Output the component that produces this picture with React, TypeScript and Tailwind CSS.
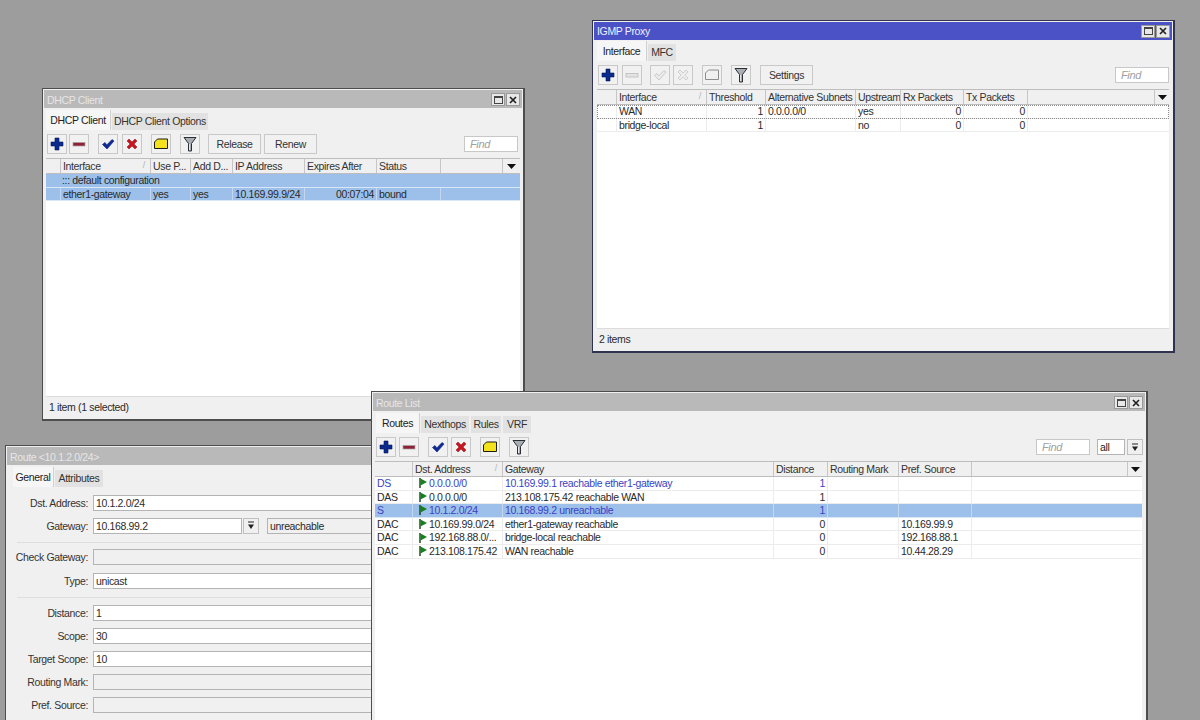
import React from "react";

type Cell = React.ReactNode;
type Row = { cells: Cell[]; selected?: boolean; blue?: boolean; focus?: boolean; span?: boolean };

function PlusIcon({ off }: { off?: boolean }) {
  return (
    <svg width="14" height="14" viewBox="0 0 14 14">
      <path d="M5 1h4v4h4v4H9v4H5V9H1V5h4z" fill={off ? "#d8d8d8" : "#0a2a8c"} stroke={off ? "#b0b0b0" : "#04155a"} strokeWidth="0.6" />
    </svg>
  );
}
function MinusIcon({ off }: { off?: boolean }) {
  return (
    <svg width="14" height="14" viewBox="0 0 14 14">
      <rect x="1" y="5.5" width="12" height="3.5" fill={off ? "#e4e4e4" : "#8e2238"} stroke={off ? "#b4b4b4" : "#a8a0a4"} strokeWidth="0.7" />
    </svg>
  );
}
function CheckIcon({ off }: { off?: boolean }) {
  return (
    <svg width="14" height="14" viewBox="0 0 14 14">
      <path d="M1.5 7.5 4 5.5l1.8 2.4L11 2.5l2 1.6L6 12z" fill={off ? "#ececec" : "#0d2a96"} stroke={off ? "#b0b0b0" : "#0a1f70"} strokeWidth="0.6" />
    </svg>
  );
}
function CrossIcon({ off }: { off?: boolean }) {
  return (
    <svg width="14" height="14" viewBox="0 0 14 14">
      <path d="M2 4l2-2 3 3 3-3 2 2-3 3 3 3-2 2-3-3-3 3-2-2 3-3z" fill={off ? "#ececec" : "#c8141e"} stroke={off ? "#b0b0b0" : "#8a0c14"} strokeWidth="0.5" />
    </svg>
  );
}
function NoteIcon({ off }: { off?: boolean }) {
  return (
    <svg width="16" height="14" viewBox="0 0 16 14">
      <path d="M1.5 5 4.5 2h10v9.5h-13z" fill={off ? "#f0f0f0" : "#f4e31c"} stroke={off ? "#8c8c8c" : "#1c1c10"} strokeWidth="1" strokeLinejoin="miter" />
    </svg>
  );
}
function FilterIcon() {
  return (
    <svg width="14" height="16" viewBox="0 0 14 16">
      <path d="M1 1.5h12L8.5 7.5V15h-3V7.5z" fill="#a9aeb4" stroke="#2c2f33" strokeWidth="1" />
      <path d="M6.5 8v6" stroke="#e8e8e8" strokeWidth="1" />
    </svg>
  );
}
function FlagIcon() {
  return (
    <svg width="8" height="10" viewBox="0 0 8 10" className="shrink-0">
      <path d="M1 0v10" stroke="#1b3d1b" strokeWidth="1.4" />
      <path d="M1.5 0.5 8 4 1.5 7.5z" fill="#14801e" />
    </svg>
  );
}
function DropIcon() {
  return (
    <svg width="8" height="9" viewBox="0 0 8 9">
      <path d="M1 1h6" stroke="#222" strokeWidth="1" />
      <path d="M1 3.5h6L4 8z" fill="#222" />
    </svg>
  );
}

function IconBtn({ className, children }: { className?: string; children: React.ReactNode }) {
  return (
    <div className={`flex h-[20px] w-[20px] shrink-0 items-center justify-center border border-[#c8c8c8] bg-[#f1f1f1] ${className ?? ""}`}>
      {children}
    </div>
  );
}
function TextBtn({ className, label }: { className: string; label: string }) {
  return (
    <div className={`flex h-[20px] shrink-0 items-center justify-center border border-[#c8c8c8] bg-[#f1f1f1] text-[#333] ${className}`}>
      {label}
    </div>
  );
}
function Find({ className }: { className?: string }) {
  return (
    <div className={`flex h-[16px] w-[54px] shrink-0 items-center border border-[#c8c8c8] bg-white pl-[5px] text-[11px] italic text-[#a0a0a0] ${className ?? ""}`}>
      Find
    </div>
  );
}

function Win({
  className,
  title,
  active,
  children,
}: {
  className: string;
  title: string;
  active?: boolean;
  children: React.ReactNode;
}) {
  return (
    <div className={`absolute flex flex-col border-b-2 border-l border-r-2 border-t ${active ? "border-[#2f3350]" : "border-[#4d4d4d]"} bg-[#f0f0f0] p-px ${className}`}>
      <div className={`flex h-[18px] shrink-0 items-center pl-[3px] pr-[2px] ${active ? "bg-[#4a52c6] text-[#eef0ff]" : "bg-[#b9b9b9] pt-px text-[#e6e6e6]"}`}>
        <span className="flex-1 truncate leading-[14px]">{title}</span>
        <div className="flex h-[13px] w-[14px] items-center justify-center border border-[#9a9a9a] bg-[#e8e8e8]">
          <div className="h-[8px] w-[9px] border border-t-2 border-[#444]" />
        </div>
        <div className="ml-px flex h-[13px] w-[14px] items-center justify-center border border-[#9a9a9a] bg-[#e8e8e8]">
          <svg width="8" height="8" viewBox="0 0 8 8">
            <path d="M1 1l6 6M7 1 1 7" stroke="#222" strokeWidth="1.7" />
          </svg>
        </div>
      </div>
      {children}
    </div>
  );
}

function Tabs({ items, className }: { items: { label: string; width: string }[]; className: string }) {
  return (
    <div className={`flex h-[20px] shrink-0 items-end ${className}`}>
      {items.map((t, i) => (
        <div
          key={t.label}
          className={
            i === 0
              ? `flex h-[20px] items-center justify-center whitespace-nowrap border-r border-[#d0d0d0] bg-[#f6f6f6] text-[#222] ${t.width}`
              : `flex h-[17px] items-center justify-center whitespace-nowrap border-r border-[#f0f0f0] bg-[#e2e2e2] text-[#333] ${t.width}`
          }
        >
          {t.label}
        </div>
      ))}
    </div>
  );
}

function Table({
  cols,
  headers,
  rows,
  aligns,
  sortIndex,
  className,
}: {
  cols: string;
  headers: string[];
  rows: Row[];
  aligns: ("l" | "r")[];
  sortIndex: number;
  className?: string;
}) {
  return (
    <div className={`mt-[4px] flex flex-1 flex-col overflow-hidden border-b border-[#dcdcdc] bg-white ${className ?? ""}`}>
      <div className={`grid h-[16px] shrink-0 border-b border-t border-[#bdbdbd] bg-[#f0f0f0] text-[#333] ${cols}`}>
        {headers.map((h, i) => (
          <div key={i} className="relative flex items-center overflow-hidden whitespace-nowrap border-l border-[#c6c6c6] pl-[2px] first:border-l-0">
            {h}
            {i === sortIndex ? <span className="absolute right-[5px] top-[2px] text-[9px] text-[#b4b4b4]">/</span> : null}
          </div>
        ))}
        <div className="flex items-center justify-center border-l border-[#c6c6c6]">
          <svg width="9" height="5" viewBox="0 0 9 5">
            <path d="M0 0h9L4.5 5z" fill="#111" />
          </svg>
        </div>
      </div>
      {rows.map((r, ri) => (
        <div
          key={ri}
          className={`grid h-[13.6px] shrink-0 border-b ${cols} ${r.selected ? "border-[#d8e6f5] bg-[#9cc0e9]" : "border-[#ececec]"} ${
            r.blue ? "text-[#3b3fc4]" : "text-[#2a2a2a]"
          } ${r.focus ? "outline outline-1 -outline-offset-1 outline-dotted outline-[#8a8a8a]" : ""}`}
        >
          {r.span ? (
            <>
              <div />
              <div className="col-span-full col-start-2 flex items-center whitespace-nowrap pl-[2px]">{r.cells[0]}</div>
            </>
          ) : (
            r.cells.map((c, i) => (
              <div
                key={i}
                className={`flex items-center overflow-hidden whitespace-nowrap border-l px-[2px] first:border-l-0 ${
                  r.selected ? "border-[#c3d8f0]" : "border-[#ececec]"
                } ${aligns[i] === "r" ? "justify-end" : ""}`}
              >
                {c}
              </div>
            ))
          )}
        </div>
      ))}
    </div>
  );
}

function Field({ label, value, off, children }: { label: string; value?: string; off?: boolean; children?: React.ReactNode }) {
  return (
    <div className="mt-[8px] flex h-[15px] shrink-0 items-center first:mt-0">
      <div className="w-[81px] shrink-0 whitespace-nowrap pt-px text-right text-[#333]">{label}</div>
      <div className={`ml-[5px] flex h-[16px] items-center border border-[#b4b4b4] pl-[2px] pt-px text-[#2a2a2a] ${children ? "w-[149px]" : "w-[400px]"} ${off ? "bg-[#f0f0f0]" : "bg-white"}`}>
        {value}
      </div>
      {children}
    </div>
  );
}

function Dst({ text }: { text: string }) {
  return (
    <span className="ml-[4px] flex items-center gap-[2px]">
      <FlagIcon />
      {text}
    </span>
  );
}

const dhcpCols = "grid-cols-[14px_90px_40px_42px_72px_72px_64px_62px_1fr]";
const igmpCols = "grid-cols-[19px_90px_59px_90px_45px_63px_64px_127px_1fr]";
const routeCols = "grid-cols-[37px_90px_271px_54px_71px_73px_156px_1fr]";

export default function App() {
  return (
    <div className="relative h-[720px] w-[1200px] overflow-hidden bg-[#9d9d9d] [font-family:Liberation_Sans,sans-serif] text-[10.5px] leading-none tracking-[-0.35px]">
      <Win className="left-[42px] top-[88px] h-[333px] w-[483px]" title="DHCP Client">
        <Tabs
          className="ml-[2px] mt-[2px]"
          items={[
            { label: "DHCP Client", width: "w-[65px]" },
            { label: "DHCP Client Options", width: "ml-[1px] w-[97px]" },
          ]}
        />
        <div className="mt-[4px] flex h-[20px] shrink-0 items-center">
          <IconBtn className="ml-[3px]"><PlusIcon /></IconBtn>
          <IconBtn className="ml-[2px]"><MinusIcon /></IconBtn>
          <IconBtn className="ml-[9px]"><CheckIcon /></IconBtn>
          <IconBtn className="ml-[4px]"><CrossIcon /></IconBtn>
          <IconBtn className="ml-[9px]"><NoteIcon /></IconBtn>
          <IconBtn className="ml-[9px]"><FilterIcon /></IconBtn>
          <TextBtn className="ml-[8px] w-[53px]" label="Release" />
          <TextBtn className="ml-[3px] w-[53px]" label="Renew" />
          <Find className="ml-[147px]" />
        </div>
        <Table
          className="mx-[2px]"
          cols={dhcpCols}
          headers={["", "Interface", "Use P...", "Add D...", "IP Address", "Expires After", "Status", ""]}
          aligns={["l", "l", "l", "l", "l", "r", "l", "l"]}
          sortIndex={1}
          rows={[
            { cells: ["::: default configuration"], selected: true, span: true },
            { cells: ["", "ether1-gateway", "yes", "yes", "10.169.99.9/24", "00:07:04", "bound", ""], selected: true },
          ]}
        />
        <div className="flex h-[21px] shrink-0 items-center pl-[5px] text-[#2a2a2a]">1 item (1 selected)</div>
      </Win>

      <Win className="left-[592px] top-[20px] h-[333px] w-[583px]" title="IGMP Proxy" active>
        <Tabs
          className="ml-[3px] mt-[1px]"
          items={[
            { label: "Interface", width: "w-[50px]" },
            { label: "MFC", width: "ml-[1px] w-[29px]" },
          ]}
        />
        <div className="mt-[4px] flex h-[20px] shrink-0 items-center">
          <IconBtn className="ml-[4px]"><PlusIcon /></IconBtn>
          <IconBtn className="ml-[4px]"><MinusIcon off /></IconBtn>
          <IconBtn className="ml-[8px]"><CheckIcon off /></IconBtn>
          <IconBtn className="ml-[3px]"><CrossIcon off /></IconBtn>
          <IconBtn className="ml-[9px]"><NoteIcon off /></IconBtn>
          <IconBtn className="ml-[9px]"><FilterIcon /></IconBtn>
          <TextBtn className="ml-[9px] w-[53px]" label="Settings" />
          <Find className="ml-[302px]" />
        </div>
        <Table
          className="mx-[3px]"
          cols={igmpCols}
          headers={["", "Interface", "Threshold", "Alternative Subnets", "Upstream", "Rx Packets", "Tx Packets", ""]}
          aligns={["l", "l", "r", "l", "l", "r", "r", "l"]}
          sortIndex={1}
          rows={[
            { cells: ["", "WAN", "1", "0.0.0.0/0", "yes", "0", "0", ""], focus: true },
            { cells: ["", "bridge-local", "1", "", "no", "0", "0", ""] },
          ]}
        />
        <div className="flex h-[21px] shrink-0 items-center pl-[5px] text-[#2a2a2a]">2 items</div>
      </Win>

      <Win className="left-[5px] top-[445px] h-[320px] w-[500px]" title="Route <10.1.2.0/24>">
        <Tabs
          className="ml-[6px] mt-[2px]"
          items={[
            { label: "General", width: "w-[41px]" },
            { label: "Attributes", width: "ml-[1px] w-[49px]" },
          ]}
        />
        <div className="mt-[8px] flex flex-col">
          <Field label="Dst. Address:" value="10.1.2.0/24" />
          <Field label="Gateway:" value="10.168.99.2">
            <div className="ml-px flex h-[16px] w-[16px] items-center justify-center border border-[#c0c0c0] bg-[#f0f0f0]">
              <DropIcon />
            </div>
            <div className="ml-[8px] flex h-[16px] w-[200px] items-center border border-[#b4b4b4] bg-[#f0f0f0] pl-[2px] pt-px text-[#2a2a2a]">unreachable</div>
          </Field>
          <div className="ml-[10px] mt-[9px] h-px w-[400px] bg-[#dedede]" />
          <div className="mt-[6px] flex flex-col">
            <Field label="Check Gateway:" off />
          </div>
          <div className="mt-[9px] flex flex-col">
            <Field label="Type:" value="unicast" />
          </div>
          <div className="ml-[10px] mt-[9px] h-px w-[400px] bg-[#dedede]" />
          <div className="mt-[7px] flex flex-col">
            <Field label="Distance:" value="1" />
            <Field label="Scope:" value="30" />
            <Field label="Target Scope:" value="10" />
            <Field label="Routing Mark:" off />
            <Field label="Pref. Source:" off />
          </div>
        </div>
      </Win>

      <Win className="left-[371px] top-[391px] h-[400px] w-[777px]" title="Route List">
        <Tabs
          className="ml-[3px] mt-[2px]"
          items={[
            { label: "Routes", width: "w-[44px]" },
            { label: "Nexthops", width: "ml-[1px] w-[49px]" },
            { label: "Rules", width: "ml-[1px] w-[31px]" },
            { label: "VRF", width: "ml-[1px] w-[29px]" },
          ]}
        />
        <div className="mt-[4px] flex h-[20px] shrink-0 items-center">
          <IconBtn className="ml-[3px]"><PlusIcon /></IconBtn>
          <IconBtn className="ml-[3px]"><MinusIcon /></IconBtn>
          <IconBtn className="ml-[9px]"><CheckIcon /></IconBtn>
          <IconBtn className="ml-[3px]"><CrossIcon /></IconBtn>
          <IconBtn className="ml-[9px]"><NoteIcon /></IconBtn>
          <IconBtn className="ml-[9px]"><FilterIcon /></IconBtn>
          <Find className="ml-[507px] w-[52px]" />
          <div className="ml-[7px] flex h-[16px] w-[28px] shrink-0 items-center border border-[#b4b4b4] bg-white pl-[2px] text-[#222]">all</div>
          <div className="ml-[2px] flex h-[16px] w-[16px] shrink-0 items-center justify-center border border-[#c0c0c0] bg-[#f0f0f0]">
            <DropIcon />
          </div>
        </div>
        <Table
          className="ml-[2px] mr-[3px]"
          cols={routeCols}
          headers={["", "Dst. Address", "Gateway", "Distance", "Routing Mark", "Pref. Source", ""]}
          aligns={["l", "l", "l", "r", "l", "l", "l"]}
          sortIndex={1}
          rows={[
            { cells: ["DS", <Dst text="0.0.0.0/0" />, "10.169.99.1 reachable ether1-gateway", "1", "", "", ""], blue: true },
            { cells: ["DAS", <Dst text="0.0.0.0/0" />, "213.108.175.42 reachable WAN", "1", "", "", ""] },
            { cells: ["S", <Dst text="10.1.2.0/24" />, "10.168.99.2 unreachable", "1", "", "", ""], blue: true, selected: true },
            { cells: ["DAC", <Dst text="10.169.99.0/24" />, "ether1-gateway reachable", "0", "", "10.169.99.9", ""] },
            { cells: ["DAC", <Dst text="192.168.88.0/..." />, "bridge-local reachable", "0", "", "192.168.88.1", ""] },
            { cells: ["DAC", <Dst text="213.108.175.42" />, "WAN reachable", "0", "", "10.44.28.29", ""] },
          ]}
        />
      </Win>
    </div>
  );
}
